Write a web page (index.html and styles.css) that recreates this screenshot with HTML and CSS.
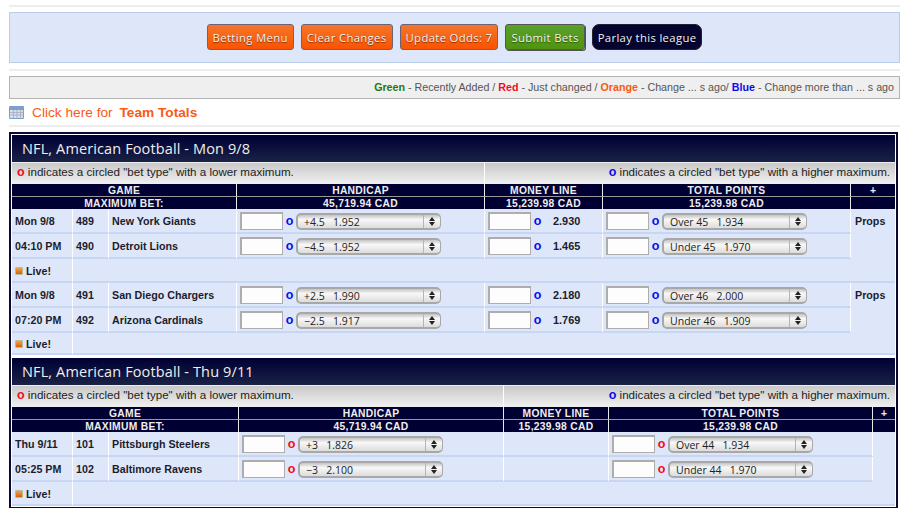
FILE: index.html
```html
<!DOCTYPE html>
<html lang="en">
<head>
    <meta charset="UTF-8">
    <meta name="viewport" content="width=device-width, initial-scale=1.0">
    <title>Betting lines</title>
    <link rel="stylesheet" href="styles.css">
</head>
<body>
    <hr class="rule rule-top">
    <div class="menu-box">
        <button class="btn btn-orange">Betting Menu</button>
        <button class="btn btn-orange">Clear Changes</button>
        <button class="btn btn-orange">Update Odds: 7</button>
        <button class="btn btn-green">Submit Bets</button>
        <button class="btn btn-navy">Parlay this league</button>
    </div>
    <hr class="rule">
    <div class="legend">
        <b class="c-green">Green</b> - Recently Added / <b class="c-red">Red</b> - Just changed / <b class="c-orange">Orange</b> - Change ... s ago/ <b class="c-blue">Blue</b> - Change more than ... s ago
    </div>
    <div class="totals">
        <svg class="totals-icon" width="15" height="13" viewBox="0 0 15 13">
            <rect width="15" height="13" rx="1" fill="#7f9fd0"/>
            <rect x="1" y="4" width="13" height="8" fill="#d9dde6"/>
            <path d="M1 6.5h13M1 9h13M4.5 4v8M8 4v8M11.5 4v8" stroke="#9aa6bd" stroke-width="0.7"/>
        </svg>
        <a class="totals-link">Click here for <b>Team Totals</b></a>
    </div>
    <hr class="rule rule-low">

    <div class="board">
        <h2 class="league">NFL, American Football - Mon 9/8</h2>
        <table class="lines lines-a">
            <colgroup>
                <col class="c-date"><col class="c-num"><col class="c-team">
                <col class="c-hcp"><col class="c-ml"><col class="c-tot"><col class="c-more">
            </colgroup>
            <tr class="notes">
                <td colspan="4"><b class="c-red dot">o</b> indicates a circled "bet type" with a lower maximum.</td>
                <td colspan="3" class="note-right"><b class="c-blue dot">o</b> indicates a circled "bet type" with a higher maximum.</td>
            </tr>
            <tr class="head">
                <th colspan="3">GAME</th><th>HANDICAP</th><th>MONEY LINE</th><th>TOTAL POINTS</th><th>+</th>
            </tr>
            <tr class="head head-max">
                <th colspan="3">MAXIMUM BET:</th><th>45,719.94 CAD</th><th>15,239.98 CAD</th><th>15,239.98 CAD</th><th></th>
            </tr>
            <tr class="game">
                <td>Mon 9/8</td><td>489</td><td>New York Giants</td>
                <td class="bet"><input class="stake"><b class="c-blue dot">o</b><span class="pick"><select><option>+4.5&nbsp;&nbsp;&nbsp;1.952</option></select></span></td>
                <td class="bet"><input class="stake"><b class="c-blue dot">o</b><span class="price">2.930</span></td>
                <td class="bet"><input class="stake"><b class="c-blue dot">o</b><span class="pick"><select><option>Over 45&nbsp;&nbsp;&nbsp;1.934</option></select></span></td>
                <td class="props" rowspan="2">Props</td>
            </tr>
            <tr class="game">
                <td>04:10 PM</td><td>490</td><td>Detroit Lions</td>
                <td class="bet"><input class="stake"><b class="c-blue dot">o</b><span class="pick"><select><option>−4.5&nbsp;&nbsp;&nbsp;1.952</option></select></span></td>
                <td class="bet"><input class="stake"><b class="c-blue dot">o</b><span class="price">1.465</span></td>
                <td class="bet"><input class="stake"><b class="c-blue dot">o</b><span class="pick"><select><option>Under 45&nbsp;&nbsp;&nbsp;1.970</option></select></span></td>
            </tr>
            <tr class="live">
                <td><i class="live-dot"></i>Live!</td><td colspan="6"></td>
            </tr>
            <tr class="game">
                <td>Mon 9/8</td><td>491</td><td>San Diego Chargers</td>
                <td class="bet"><input class="stake"><b class="c-blue dot">o</b><span class="pick"><select><option>+2.5&nbsp;&nbsp;&nbsp;1.990</option></select></span></td>
                <td class="bet"><input class="stake"><b class="c-blue dot">o</b><span class="price">2.180</span></td>
                <td class="bet"><input class="stake"><b class="c-blue dot">o</b><span class="pick"><select><option>Over 46&nbsp;&nbsp;&nbsp;2.000</option></select></span></td>
                <td class="props" rowspan="2">Props</td>
            </tr>
            <tr class="game">
                <td>07:20 PM</td><td>492</td><td>Arizona Cardinals</td>
                <td class="bet"><input class="stake"><b class="c-blue dot">o</b><span class="pick"><select><option>−2.5&nbsp;&nbsp;&nbsp;1.917</option></select></span></td>
                <td class="bet"><input class="stake"><b class="c-blue dot">o</b><span class="price">1.769</span></td>
                <td class="bet"><input class="stake"><b class="c-blue dot">o</b><span class="pick"><select><option>Under 46&nbsp;&nbsp;&nbsp;1.909</option></select></span></td>
            </tr>
            <tr class="live live-last">
                <td><i class="live-dot"></i>Live!</td><td colspan="6"></td>
            </tr>
        </table>

        <h2 class="league league-next">NFL, American Football - Thu 9/11</h2>
        <table class="lines lines-b">
            <colgroup>
                <col class="c-date"><col class="c-num"><col class="c-team">
                <col class="c-hcp"><col class="c-ml"><col class="c-tot"><col class="c-more">
            </colgroup>
            <tr class="notes">
                <td colspan="4"><b class="c-red dot">o</b> indicates a circled "bet type" with a lower maximum.</td>
                <td colspan="3" class="note-right"><b class="c-blue dot">o</b> indicates a circled "bet type" with a higher maximum.</td>
            </tr>
            <tr class="head">
                <th colspan="3">GAME</th><th>HANDICAP</th><th>MONEY LINE</th><th>TOTAL POINTS</th><th>+</th>
            </tr>
            <tr class="head head-max">
                <th colspan="3">MAXIMUM BET:</th><th>45,719.94 CAD</th><th>15,239.98 CAD</th><th>15,239.98 CAD</th><th></th>
            </tr>
            <tr class="game">
                <td>Thu 9/11</td><td>101</td><td>Pittsburgh Steelers</td>
                <td class="bet"><input class="stake"><b class="c-red dot">o</b><span class="pick"><select><option>+3&nbsp;&nbsp;&nbsp;1.826</option></select></span></td>
                <td class="bet"></td>
                <td class="bet"><input class="stake"><b class="c-red dot">o</b><span class="pick"><select><option>Over 44&nbsp;&nbsp;&nbsp;1.934</option></select></span></td>
                <td class="props" rowspan="2"></td>
            </tr>
            <tr class="game">
                <td>05:25 PM</td><td>102</td><td>Baltimore Ravens</td>
                <td class="bet"><input class="stake"><b class="c-red dot">o</b><span class="pick"><select><option>−3&nbsp;&nbsp;&nbsp;2.100</option></select></span></td>
                <td class="bet"></td>
                <td class="bet"><input class="stake"><b class="c-red dot">o</b><span class="pick"><select><option>Under 44&nbsp;&nbsp;&nbsp;1.970</option></select></span></td>
            </tr>
            <tr class="live">
                <td><i class="live-dot"></i>Live!</td><td colspan="6"></td>
            </tr>
        </table>
    </div>
</body>
</html>
```

FILE: styles.css
```css
* {
    box-sizing: border-box;
}
html, body {
    height: 508px;
    overflow: hidden;
}
body {
    margin: 0;
    padding: 5px 0 0 9px;
    font-family: "Liberation Sans", Arial, sans-serif;
    background-color: #fff;
}
.rule {
    height: 2px;
    border: none;
    margin: 6px 0 5px;
    background-color: #eee;
}
.rule-top {
    margin: 0 0 5px;
}
.rule-low {
    margin: 5px 0 5px;
}
.menu-box {
    display: flex;
    justify-content: center;
    gap: 7px;
    height: 51px;
    padding-top: 11px;
    background-color: #dee7f9;
    border: 1px solid #b9cde9;
}
.btn {
    height: 26px;
    padding: 0 5px;
    font-family: "Open Sans", sans-serif;
    font-size: 11.3px;
    letter-spacing: 0.35px;
    color: #f2f2f2;
    text-shadow: 0 1px 1px rgba(0, 0, 0, 0.5);
    border: 1px solid #667;
    border-radius: 3px;
}
.btn-orange {
    background: linear-gradient(#f5752c, #fa5300);
}
.btn-green {
    background: linear-gradient(#5aa02a, #4f9410);
    border: 1px solid #555;
    box-shadow: 1px 1px 0 #555;
}
.btn-navy {
    background-color: #05052f;
    border-color: #223;
    border-radius: 7px;
}
.legend {
    height: 23px;
    padding-right: 5px;
    font-size: 10.7px;
    line-height: 21px;
    text-align: right;
    color: #555;
    background-color: #efefef;
    border: 1px solid #b3b3b3;
}
.c-green { color: #1f7a10; }
.c-red { color: #f30b1d; }
.c-orange { color: #fa5a0a; }
.c-blue { color: #0b0bea; }
.totals {
    display: flex;
    align-items: center;
    gap: 8px;
    height: 16px;
    margin-top: 5px;
}
.totals-link {
    font-size: 13.7px;
    color: #fa5a14;
}
.totals-link b {
    margin-left: 3px;
}
.board {
    width: 889px;
    padding: 1px;
    border: 2px solid #0a0a2e;
}
.league {
    height: 27px;
    margin: 0;
    padding-left: 10px;
    font-family: "Open Sans", sans-serif;
    font-size: 14.5px;
    font-weight: normal;
    letter-spacing: 0.12px;
    line-height: 27px;
    color: #eee;
    background: linear-gradient(#000033, #1a2246);
}
.league-next {
    margin-top: 3px;
}
.lines {
    width: 883px;
    table-layout: fixed;
    border-collapse: separate;
    border-spacing: 0;
    background-color: #dee7f9;
}
.c-date { width: 61px; }
.c-num { width: 36px; }
.lines-a .c-team { width: 128px; }
.lines-a .c-hcp { width: 248px; }
.lines-a .c-ml { width: 118px; }
.lines-a .c-tot { width: 248px; }
.lines-a .c-more { width: 44px; }
.lines-b .c-team { width: 130px; }
.lines-b .c-hcp { width: 265px; }
.lines-b .c-ml { width: 105px; }
.lines-b .c-tot { width: 264px; }
.lines-b .c-more { width: 22px; }
.lines td {
    padding: 0 0 0 3px;
    font-size: 10.7px;
    font-weight: bold;
    color: #1c1c2c;
}
.lines .notes td {
    height: 22px;
    padding: 0 5px 4px;
    font-size: 11.6px;
    font-weight: normal;
    color: #222;
    border-top: 1px solid #eee;
    border-right: 1px solid #fff;
    background: linear-gradient(#c9c9c9, #f0f0f0);
}
.lines .notes td:last-child {
    border-right: none;
}
.lines .notes .note-right {
    text-align: right;
}
.dot {
    font-size: 12.5px;
}
.head th {
    height: 13px;
    padding: 1px 0 0;
    font-size: 10.3px;
    line-height: 11px;
    letter-spacing: 0.3px;
    color: #eee;
    background-color: #000033;
    border-right: 1px solid #e8e8e8;
    border-bottom: 1px solid #999;
}
.head-max th {
    height: 12px;
    border-bottom: none;
}
.head th:last-child {
    border-right: none;
}
.game td {
    height: 25px;
    border-right: 1px solid #fff;
    border-bottom: 2px solid #c7d6f2;
}
.game .props {
    padding: 6px 0 0 4px;
    vertical-align: top;
    border: none;
}
.live td {
    height: 24px;
    padding-top: 2px;
    border-bottom: 2px solid #c7d6f2;
}
.live-last td {
    height: 22px;
}
.live td:first-child {
    border-right: 1px solid #fff;
}
.live-dot {
    display: inline-block;
    width: 8px;
    height: 8px;
    margin-right: 3px;
    border: 1px solid #b9b9a0;
    border-radius: 1px;
    background: linear-gradient(#f5a044, #d95f0a);
}
.bet {
    white-space: nowrap;
}
.lines .bet {
    padding-top: 1px;
}
.stake {
    width: 43px;
    height: 18px;
    padding: 0;
    vertical-align: middle;
    background-color: #fdfdfd;
    border: 2px solid #adadad;
    border-right-width: 1px;
    border-bottom-width: 1px;
}
.bet .dot {
    display: inline-block;
    width: 13px;
    text-align: center;
    vertical-align: middle;
}
.price {
    margin-left: 9px;
    font-size: 10.9px;
    vertical-align: middle;
}
.pick {
    position: relative;
    display: inline-block;
    vertical-align: middle;
}
.pick select {
    display: block;
    width: 145px;
    height: 17px;
    padding: 0 0 0 6px;
    font-family: "Open Sans", sans-serif;
    font-size: 10.5px;
    color: #222;
    appearance: none;
    border: 2px solid #a8a8a8;
    border-right-width: 1px;
    border-radius: 5px;
    background: linear-gradient(to right, transparent 125px, #b5b5b5 125px, #b5b5b5 126px, transparent 126px), linear-gradient(#c4c4c4, #f8f8f8 35%, #dcdcdc);
}
.pick::before,
.pick::after {
    content: "";
    position: absolute;
    right: 6px;
    border-left: 3px solid transparent;
    border-right: 3px solid transparent;
}
.pick::before {
    top: 4px;
    border-bottom: 4px solid #222;
}
.pick::after {
    top: 9px;
    border-top: 4px solid #222;
}
```
